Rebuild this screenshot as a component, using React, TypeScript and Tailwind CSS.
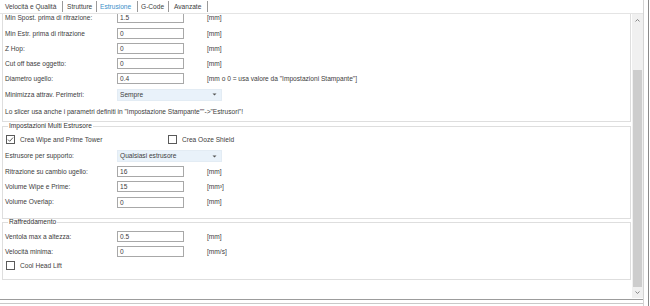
import React from "react";

const tabs = [
  { label: "Velocità e Qualità", w: "w-[63px] pl-[5px]" },
  { label: "Strutture", w: "w-[34px] pl-[4px]" },
  { label: "Estrusione", w: "w-[41px] pl-[3px]", active: true },
  { label: "G-Code", w: "w-[31px] pl-[3px]" },
  { label: "Avanzate", w: "w-[39px] pl-[5px]" },
];

const Field = ({ value }: { value: string }) => (
  <div className="w-[67px] h-[11px] border border-[#a8a8a8] bg-white pl-[2px] leading-[9px]">{value}</div>
);

const Select = ({ value }: { value: string }) => (
  <div className="w-[105px] h-[12px] bg-[#e9f2fa] border border-[#e3ecf4] flex items-center pl-[2px] pr-[4px]">
    <span className="flex-1">{value}</span>
    <svg width="5" height="3" viewBox="0 0 5 3">
      <path d="M0.5 0.5 L2.5 2.5 L4.5 0.5" fill="#555" />
    </svg>
  </div>
);

const Row = ({ label, h = "h-[15px]", children }: { label: string; h?: string; children: React.ReactNode }) => (
  <div className={`flex items-center ${h}`}>
    <span className="w-[112px] shrink-0">{label}</span>
    {children}
  </div>
);

const InputRow = ({ label, value, unit, h }: { label: string; value: string; unit: string; h?: string }) => (
  <Row label={label} h={h}>
    <Field value={value} />
    <span className="ml-[23px]">{unit}</span>
  </Row>
);

const Check = ({ checked, label }: { checked?: boolean; label: string }) => (
  <div className="flex items-center gap-[5px]">
    <svg width="9" height="9" viewBox="0 0 9 9">
      <rect x="0.5" y="0.5" width="8" height="8" fill="white" stroke="#5a5a5a" />
      {checked && <path d="M2 4.6 L3.7 6.3 L7 2.6" fill="none" stroke="#4a4a4a" strokeWidth="0.9" />}
    </svg>
    <span>{label}</span>
  </div>
);

const Scrollbar = () => (
  <div className="w-[11px] bg-[#f0f0f0] flex flex-col items-center">
    <svg width="7" height="11" viewBox="0 0 7 11" className="mt-[1px]">
      <path d="M1.5 6.5 L3.5 4.5 L5.5 6.5" fill="none" stroke="#7a7a7a" strokeWidth="0.9" />
    </svg>
    <div className="mt-[44px] w-[9px] h-[218px] bg-[#cdcdcd]" />
    <svg width="7" height="11" viewBox="0 0 7 11">
      <path d="M1.5 4.5 L3.5 6.5 L5.5 4.5" fill="none" stroke="#7a7a7a" strokeWidth="0.9" />
    </svg>
  </div>
);

export default function App() {
  return (
    <div className="w-[650px] h-[306px] bg-white flex overflow-hidden text-[6.6px] text-[#404040] font-['Liberation_Sans',Arial,sans-serif]">
      <div className="w-[643px] flex flex-col">
        <div className="h-[14px] flex items-center border-b border-[#e4e4e4] pb-[1px]">
          {tabs.map((t) => (
            <div
              key={t.label}
              className={`${t.w} h-[11px] leading-[11px] border-r border-[#9a9a9a] ${t.active ? "text-[#3a8fc9]" : ""}`}
            >
              {t.label}
            </div>
          ))}
        </div>
        <div className="flex h-[284px]">
          <div className="flex-1 overflow-hidden">
            <div className="-mt-[5px]">
              <div className="ml-[2px] mr-[1px] border-x border-b border-[#dedede] pl-[2px]">
                <InputRow label="Min Spost. prima di ritrazione:" value="1.5" unit="[mm]" h="h-[17px]" />
                <InputRow label="Min Estr. prima di ritrazione" value="0" unit="[mm]" />
                <InputRow label="Z Hop:" value="0" unit="[mm]" />
                <InputRow label="Cut off base oggetto:" value="0" unit="[mm]" />
                <InputRow label="Diametro ugello:" value="0.4" unit={'[mm o 0 = usa valore da "Impostazioni Stampante"]'} />
                <Row label="Minimizza attrav. Perimetri:" h="h-[17px]">
                  <Select value="Sempre" />
                </Row>
                <div className="h-[18px] flex items-center">
                  {'Lo slicer usa anche i parametri definiti in "Impostazione Stampante""->"Estrusori"!'}
                </div>
              </div>

              <fieldset className="ml-[2px] mr-[1px] border border-[#dedede] pl-[2px] pb-[8px]">
                <legend className="ml-[3px] px-[1px] leading-[8px] text-[#333]">Impostazioni Multi Estrusore</legend>
                <div className="h-[18px] pt-[2px] flex items-center pl-[1px]">
                  <div className="w-[162px]">
                    <Check checked label="Crea Wipe and Prime Tower" />
                  </div>
                  <Check label="Crea Ooze Shield" />
                </div>
                <Row label="Estrusore per supporto:" h="h-[16px]">
                  <Select value="Qualsiasi estrusore" />
                </Row>
                <InputRow label="Ritrazione su cambio ugello:" value="16" unit="[mm]" />
                <InputRow label="Volume Wipe e Prime:" value="15" unit="[mm³]" />
                <InputRow label="Volume Overlap:" value="0" unit="[mm]" h="h-[16px]" />
              </fieldset>

              <fieldset className="ml-[2px] mr-[1px] border border-[#dedede] pl-[2px] pt-[4px] pb-[6px]">
                <legend className="ml-[3px] px-[1px] leading-[6px] text-[#333]">Raffreddamento</legend>
                <InputRow label="Ventola max a altezza:" value="0.5" unit="[mm]" />
                <InputRow label="Velocità minima:" value="0" unit="[mm/s]" />
                <div className="h-[14px] flex items-center pl-[1px]">
                  <Check label="Cool Head Lift" />
                </div>
              </fieldset>
            </div>
          </div>
          <Scrollbar />
        </div>
        <div className="border-t border-[#9c9c9c] mt-[1px]" />
        <div className="border-t border-[#c9c9c9] mt-[3px]" />
      </div>
      <div className="w-[7px] flex">
        <div className="w-[1px] bg-[#d4d4d4]" />
        <div className="w-[4px]" />
        <div className="w-[1px] bg-[#8a8a8a]" />
      </div>
    </div>
  );
}
